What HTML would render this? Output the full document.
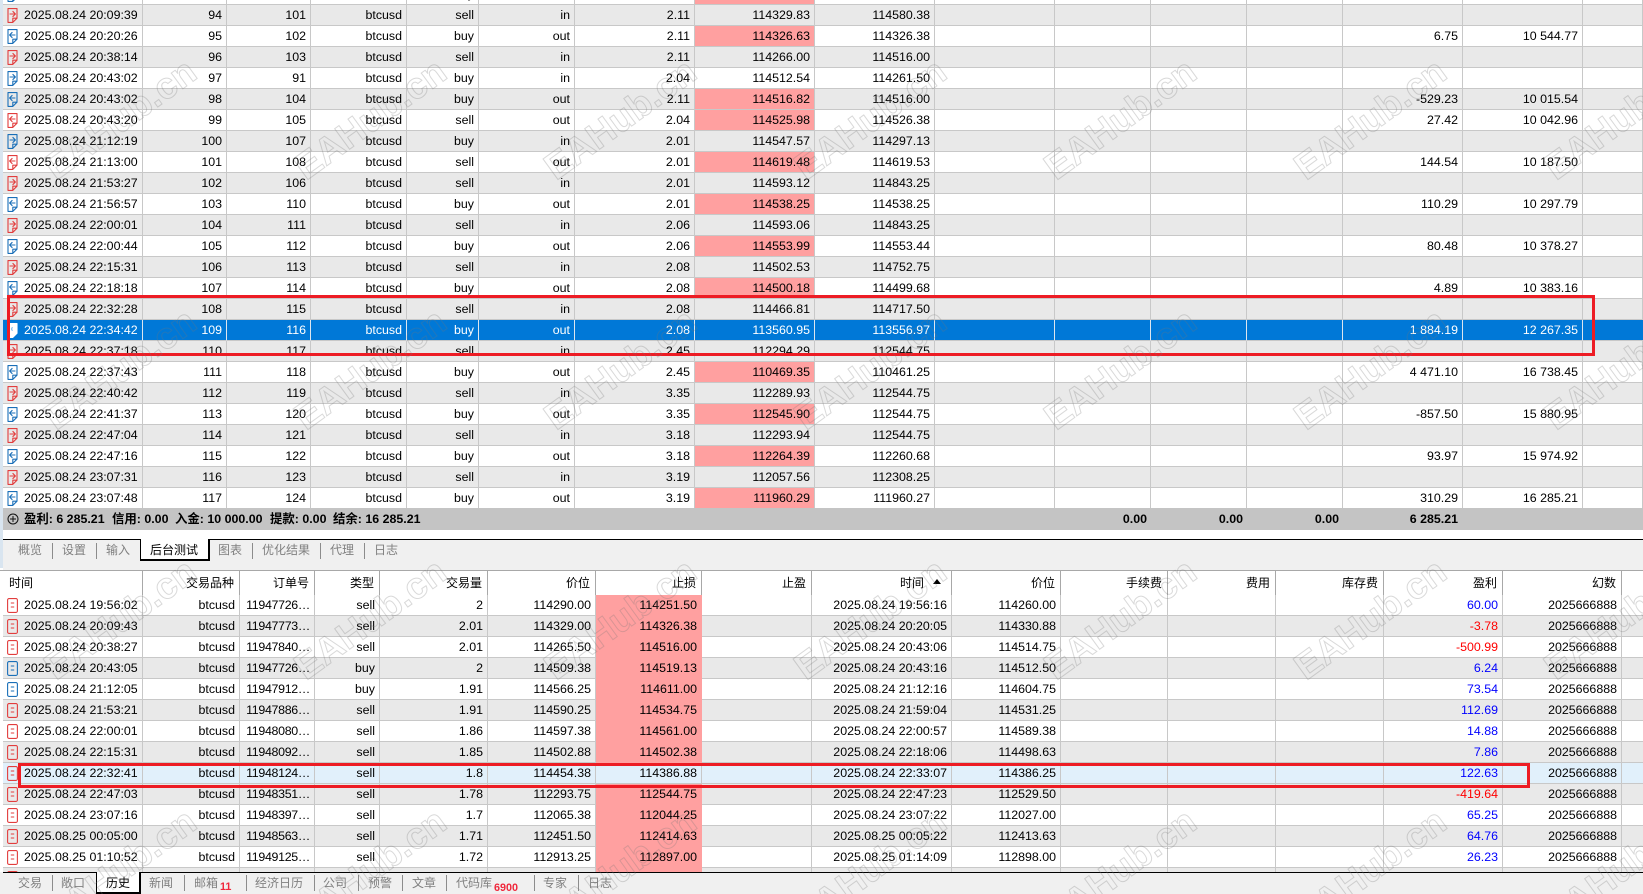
<!DOCTYPE html>
<html lang="zh"><head><meta charset="utf-8"><title>Backtest</title>
<style>
html,body{margin:0;padding:0;background:#fff}
body{position:relative;width:1643px;height:894px;overflow:hidden;font:12.4px/20px "Liberation Sans","Noto Sans CJK SC",sans-serif;color:#000}
table{position:absolute;left:3px;border-collapse:separate;border-spacing:0;table-layout:fixed;width:1640px}
td{height:21px;box-sizing:border-box;padding:1px 4px 0 0;line-height:19px;border-right:1px solid #c8c8c8;border-bottom:1px solid #c8c8c8;text-align:right;white-space:nowrap;overflow:hidden;background:#fff;position:relative}
td:first-child{text-align:left;padding-left:21px}
tr.g td{background:#e9e9e9}
tr.s td{background:#0078d7;color:#fff;border-right-color:#dde6ef;border-bottom-color:#c8c8c8}
tr.h td{background:#e1f0fb}
td.p,tr.g td.p,tr.h td.p{background:#ffa0a0}
#b td.p{border-bottom-color:#ffa0a0;border-right-color:#ffa0a0}
#b td:nth-child(3){letter-spacing:-.3px}
#b tr.k td{height:25px;border-bottom:0;border-top:1px solid #a8a8a8;border-right-color:#a8a8a8;font-size:12px;padding:0 5px 0 0;line-height:20px;letter-spacing:0}
#b tr.k td:first-child{padding-left:6px}
svg.i{position:absolute;left:4px;top:3px;width:11px;height:15px;fill:none;stroke-width:1.1;stroke-linejoin:round}
.r{stroke:#e23d3d}.u{stroke:#1a6fb8}
.w{fill:#fff!important;stroke:#fff}
.bl{color:#0000ff}.rd{color:#ff0000}
.a{position:absolute}
.bar{left:3px;top:508px;width:1640px;height:22px;background:#c4c4c4}
.sum{top:509px;font-weight:700;line-height:21px;white-space:nowrap}
.t{position:absolute;transform:translateX(-50%);font-size:12px;line-height:16px;color:#808080;white-space:nowrap}
.l{position:absolute;width:1px;background:#8c8c8c}
.n{position:absolute;font-weight:700;font-size:10.8px;line-height:12px;color:#f0283c}
</style></head><body>
<svg width="0" height="0" style="position:absolute"><defs>
<symbol id="ai" viewBox="0 0 11 15"><path d="M1 .6h9v9.6l-4.2 4.2H1zM5.8 14.4v-4.2H10M2.6 6h5.6M5.6 3.2 8.4 6 5.6 8.8"/></symbol>
<symbol id="ao" viewBox="0 0 11 15"><path d="M1 .6h9v9.6l-4.2 4.2H1zM5.8 14.4v-4.2H10M8.4 6H2.8M5.4 3.2 2.6 6l2.8 2.8"/></symbol>
<symbol id="d" viewBox="0 0 11 15"><path d="M2 .6h7a1.4 1.4 0 0 1 1.4 1.4v11a1.4 1.4 0 0 1-1.4 1.4H2A1.4 1.4 0 0 1 .6 13V2A1.4 1.4 0 0 1 2 .6zM3.8 5h3.4M3.8 9h3.4"/></symbol>
</defs></svg>

<div class="a" style="left:0;top:0;width:3px;height:568px;background:#d9e5f0"></div>

<table id="t" style="top:-16px">
<colgroup><col style="width:140px"><col style="width:84px"><col style="width:84px"><col style="width:96px"><col style="width:72px"><col style="width:96px"><col style="width:120px"><col style="width:120px"><col style="width:120px"><col style="width:120px"><col style="width:96px"><col style="width:96px"><col style="width:96px"><col style="width:120px"><col style="width:120px"><col style="width:60px"></colgroup>
<tr><td><svg class="i u"><use href="#ao"/></svg><td><td><td><td>buy<td><td><td class="p"><td><td><td><td><td><td><td><td></tr>
<tr class="g"><td><svg class="i r"><use href="#ai"/></svg>2025.08.24 20:09:39<td>94<td>101<td>btcusd<td>sell<td>in<td>2.11<td>114329.83<td>114580.38<td><td><td><td><td><td><td></tr>
<tr><td><svg class="i u"><use href="#ao"/></svg>2025.08.24 20:20:26<td>95<td>102<td>btcusd<td>buy<td>out<td>2.11<td class="p">114326.63<td>114326.38<td><td><td><td><td>6.75<td>10 544.77<td></tr>
<tr class="g"><td><svg class="i r"><use href="#ai"/></svg>2025.08.24 20:38:14<td>96<td>103<td>btcusd<td>sell<td>in<td>2.11<td>114266.00<td>114516.00<td><td><td><td><td><td><td></tr>
<tr><td><svg class="i u"><use href="#ai"/></svg>2025.08.24 20:43:02<td>97<td>91<td>btcusd<td>buy<td>in<td>2.04<td>114512.54<td>114261.50<td><td><td><td><td><td><td></tr>
<tr class="g"><td><svg class="i u"><use href="#ao"/></svg>2025.08.24 20:43:02<td>98<td>104<td>btcusd<td>buy<td>out<td>2.11<td class="p">114516.82<td>114516.00<td><td><td><td><td>-529.23<td>10 015.54<td></tr>
<tr><td><svg class="i r"><use href="#ao"/></svg>2025.08.24 20:43:20<td>99<td>105<td>btcusd<td>sell<td>out<td>2.04<td class="p">114525.98<td>114526.38<td><td><td><td><td>27.42<td>10 042.96<td></tr>
<tr class="g"><td><svg class="i u"><use href="#ai"/></svg>2025.08.24 21:12:19<td>100<td>107<td>btcusd<td>buy<td>in<td>2.01<td>114547.57<td>114297.13<td><td><td><td><td><td><td></tr>
<tr><td><svg class="i r"><use href="#ao"/></svg>2025.08.24 21:13:00<td>101<td>108<td>btcusd<td>sell<td>out<td>2.01<td class="p">114619.48<td>114619.53<td><td><td><td><td>144.54<td>10 187.50<td></tr>
<tr class="g"><td><svg class="i r"><use href="#ai"/></svg>2025.08.24 21:53:27<td>102<td>106<td>btcusd<td>sell<td>in<td>2.01<td>114593.12<td>114843.25<td><td><td><td><td><td><td></tr>
<tr><td><svg class="i u"><use href="#ao"/></svg>2025.08.24 21:56:57<td>103<td>110<td>btcusd<td>buy<td>out<td>2.01<td class="p">114538.25<td>114538.25<td><td><td><td><td>110.29<td>10 297.79<td></tr>
<tr class="g"><td><svg class="i r"><use href="#ai"/></svg>2025.08.24 22:00:01<td>104<td>111<td>btcusd<td>sell<td>in<td>2.06<td>114593.06<td>114843.25<td><td><td><td><td><td><td></tr>
<tr><td><svg class="i u"><use href="#ao"/></svg>2025.08.24 22:00:44<td>105<td>112<td>btcusd<td>buy<td>out<td>2.06<td class="p">114553.99<td>114553.44<td><td><td><td><td>80.48<td>10 378.27<td></tr>
<tr class="g"><td><svg class="i r"><use href="#ai"/></svg>2025.08.24 22:15:31<td>106<td>113<td>btcusd<td>sell<td>in<td>2.08<td>114502.53<td>114752.75<td><td><td><td><td><td><td></tr>
<tr><td><svg class="i u"><use href="#ao"/></svg>2025.08.24 22:18:18<td>107<td>114<td>btcusd<td>buy<td>out<td>2.08<td class="p">114500.18<td>114499.68<td><td><td><td><td>4.89<td>10 383.16<td></tr>
<tr class="g"><td><svg class="i r"><use href="#ai"/></svg>2025.08.24 22:32:28<td>108<td>115<td>btcusd<td>sell<td>in<td>2.08<td>114466.81<td>114717.50<td><td><td><td><td><td><td></tr>
<tr class="s"><td><svg class="i w" style="stroke:#fff"><use href="#ao"/></svg>2025.08.24 22:34:42<td>109<td>116<td>btcusd<td>buy<td>out<td>2.08<td>113560.95<td>113556.97<td><td><td><td><td>1 884.19<td>12 267.35<td style="border-right:0"></tr>
<tr class="g"><td><svg class="i r"><use href="#ai"/></svg>2025.08.24 22:37:18<td>110<td>117<td>btcusd<td>sell<td>in<td>2.45<td>112294.29<td>112544.75<td><td><td><td><td><td><td></tr>
<tr><td><svg class="i u"><use href="#ao"/></svg>2025.08.24 22:37:43<td>111<td>118<td>btcusd<td>buy<td>out<td>2.45<td class="p">110469.35<td>110461.25<td><td><td><td><td>4 471.10<td>16 738.45<td></tr>
<tr class="g"><td><svg class="i r"><use href="#ai"/></svg>2025.08.24 22:40:42<td>112<td>119<td>btcusd<td>sell<td>in<td>3.35<td>112289.93<td>112544.75<td><td><td><td><td><td><td></tr>
<tr><td><svg class="i u"><use href="#ao"/></svg>2025.08.24 22:41:37<td>113<td>120<td>btcusd<td>buy<td>out<td>3.35<td class="p">112545.90<td>112544.75<td><td><td><td><td>-857.50<td>15 880.95<td></tr>
<tr class="g"><td><svg class="i r"><use href="#ai"/></svg>2025.08.24 22:47:04<td>114<td>121<td>btcusd<td>sell<td>in<td>3.18<td>112293.94<td>112544.75<td><td><td><td><td><td><td></tr>
<tr><td><svg class="i u"><use href="#ao"/></svg>2025.08.24 22:47:16<td>115<td>122<td>btcusd<td>buy<td>out<td>3.18<td class="p">112264.39<td>112260.68<td><td><td><td><td>93.97<td>15 974.92<td></tr>
<tr class="g"><td><svg class="i r"><use href="#ai"/></svg>2025.08.24 23:07:31<td>116<td>123<td>btcusd<td>sell<td>in<td>3.19<td>112057.56<td>112308.25<td><td><td><td><td><td><td></tr>
<tr><td><svg class="i u"><use href="#ao"/></svg>2025.08.24 23:07:48<td>117<td>124<td>btcusd<td>buy<td>out<td>3.19<td class="p">111960.29<td>111960.27<td><td><td><td><td>310.29<td>16 285.21<td></tr>
</table>

<div class="a bar"></div>
<svg class="a" style="left:7px;top:513px" width="12" height="12" fill="none" stroke="#111"><circle cx="6" cy="6" r="5"/><path d="M3 6h6M6 3v6"/></svg>
<div class="a sum" style="left:24px">盈利: 6 285.21</div>
<div class="a sum" style="left:112px">信用: 0.00</div>
<div class="a sum" style="left:175px">入金: 10 000.00</div>
<div class="a sum" style="left:270px">提款: 0.00</div>
<div class="a sum" style="left:333px">结余: 16 285.21</div>
<div class="a sum" style="right:496px">0.00</div>
<div class="a sum" style="right:400px">0.00</div>
<div class="a sum" style="right:304px">0.00</div>
<div class="a sum" style="right:185px">6 285.21</div>

<div class="a" style="left:3px;top:539px;width:1640px;height:1px;background:#000"></div>
<div class="a" style="left:3px;top:540px;width:1640px;height:30px;background:#f0f0f0"></div>
<div class="a" style="left:140px;top:539px;width:67px;height:20px;background:#fff;border-left:1px solid #000;border-right:2px solid #000;border-bottom:2px solid #000"></div>
<div class="t" style="left:30px;top:542px">概览</div><div class="l" style="left:52px;top:543px;height:16px"></div>
<div class="t" style="left:74px;top:542px">设置</div><div class="l" style="left:96px;top:543px;height:16px"></div>
<div class="t" style="left:118px;top:542px">输入</div>
<div class="t" style="left:174px;top:542px;color:#000">后台测试</div>
<div class="t" style="left:230px;top:542px">图表</div><div class="l" style="left:252px;top:543px;height:16px"></div>
<div class="t" style="left:286px;top:542px">优化结果</div><div class="l" style="left:320px;top:543px;height:16px"></div>
<div class="t" style="left:342px;top:542px">代理</div><div class="l" style="left:364px;top:543px;height:16px"></div>
<div class="t" style="left:386px;top:542px">日志</div>

<div class="a" style="left:0;top:570px;width:3px;height:1px;background:#a8a8a8"></div>
<table id="b" style="top:570px">
<colgroup><col style="width:140px"><col style="width:97px"><col style="width:75px"><col style="width:65px"><col style="width:108px"><col style="width:108px"><col style="width:106px"><col style="width:110px"><col style="width:140px"><col style="width:109px"><col style="width:107px"><col style="width:108px"><col style="width:108px"><col style="width:119px"><col style="width:119px"><col style="width:22px"></colgroup>
<tr class="k"><td>时间<td>交易品种<td>订单号<td>类型<td>交易量<td>价位<td>止损<td>止盈<td style="padding-right:27px">时间<td>价位<td>手续费<td>费用<td>库存费<td>盈利<td>幻数<td></tr>
<tr><td><svg class="i r"><use href="#d"/></svg>2025.08.24 19:56:02<td>btcusd<td>11947726…<td>sell<td>2<td>114290.00<td class="p">114251.50<td><td>2025.08.24 19:56:16<td>114260.00<td><td><td><td class="bl">60.00<td>2025666888<td></tr>
<tr class="g"><td><svg class="i r"><use href="#d"/></svg>2025.08.24 20:09:43<td>btcusd<td>11947773…<td>sell<td>2.01<td>114329.00<td class="p">114326.38<td><td>2025.08.24 20:20:05<td>114330.88<td><td><td><td class="rd">-3.78<td>2025666888<td></tr>
<tr><td><svg class="i r"><use href="#d"/></svg>2025.08.24 20:38:27<td>btcusd<td>11947840…<td>sell<td>2.01<td>114265.50<td class="p">114516.00<td><td>2025.08.24 20:43:06<td>114514.75<td><td><td><td class="rd">-500.99<td>2025666888<td></tr>
<tr class="g"><td><svg class="i u"><use href="#d"/></svg>2025.08.24 20:43:05<td>btcusd<td>11947726…<td>buy<td>2<td>114509.38<td class="p">114519.13<td><td>2025.08.24 20:43:16<td>114512.50<td><td><td><td class="bl">6.24<td>2025666888<td></tr>
<tr><td><svg class="i u"><use href="#d"/></svg>2025.08.24 21:12:05<td>btcusd<td>11947912…<td>buy<td>1.91<td>114566.25<td class="p">114611.00<td><td>2025.08.24 21:12:16<td>114604.75<td><td><td><td class="bl">73.54<td>2025666888<td></tr>
<tr class="g"><td><svg class="i r"><use href="#d"/></svg>2025.08.24 21:53:21<td>btcusd<td>11947886…<td>sell<td>1.91<td>114590.25<td class="p">114534.75<td><td>2025.08.24 21:59:04<td>114531.25<td><td><td><td class="bl">112.69<td>2025666888<td></tr>
<tr><td><svg class="i r"><use href="#d"/></svg>2025.08.24 22:00:01<td>btcusd<td>11948080…<td>sell<td>1.86<td>114597.38<td class="p">114561.00<td><td>2025.08.24 22:00:57<td>114589.38<td><td><td><td class="bl">14.88<td>2025666888<td></tr>
<tr class="g"><td><svg class="i r"><use href="#d"/></svg>2025.08.24 22:15:31<td>btcusd<td>11948092…<td>sell<td>1.85<td>114502.88<td class="p">114502.38<td><td>2025.08.24 22:18:06<td>114498.63<td><td><td><td class="bl">7.86<td>2025666888<td></tr>
<tr class="h"><td><svg class="i r"><use href="#d"/></svg>2025.08.24 22:32:41<td>btcusd<td>11948124…<td>sell<td>1.8<td>114454.38<td>114386.88<td><td>2025.08.24 22:33:07<td>114386.25<td><td><td><td class="bl">122.63<td>2025666888<td></tr>
<tr class="g"><td><svg class="i r"><use href="#d"/></svg>2025.08.24 22:47:03<td>btcusd<td>11948351…<td>sell<td>1.78<td>112293.75<td class="p">112544.75<td><td>2025.08.24 22:47:23<td>112529.50<td><td><td><td class="rd">-419.64<td>2025666888<td></tr>
<tr><td><svg class="i r"><use href="#d"/></svg>2025.08.24 23:07:16<td>btcusd<td>11948397…<td>sell<td>1.7<td>112065.38<td class="p">112044.25<td><td>2025.08.24 23:07:22<td>112027.00<td><td><td><td class="bl">65.25<td>2025666888<td></tr>
<tr class="g"><td><svg class="i r"><use href="#d"/></svg>2025.08.25 00:05:00<td>btcusd<td>11948563…<td>sell<td>1.71<td>112451.50<td class="p">112414.63<td><td>2025.08.25 00:05:22<td>112413.63<td><td><td><td class="bl">64.76<td>2025666888<td></tr>
<tr><td><svg class="i r"><use href="#d"/></svg>2025.08.25 01:10:52<td>btcusd<td>11949125…<td>sell<td>1.72<td>112913.25<td class="p">112897.00<td><td>2025.08.25 01:14:09<td>112898.00<td><td><td><td class="bl">26.23<td>2025666888<td></tr>
<tr class="g"><td><svg class="i r"><use href="#d"/></svg><td><td><td><td><td><td class="p"><td><td><td><td><td><td><td><td><td></tr>
</table>
<div class="a" style="left:933px;top:579px;width:0;height:0;border-left:4px solid transparent;border-right:4px solid transparent;border-bottom:5px solid #000"></div>

<div class="a" style="left:0;top:872px;width:1643px;height:22px;background:#f0f0f0"></div>
<div class="a" style="left:3px;top:872px;width:1640px;height:1px;background:#000"></div>
<div class="a" style="left:96px;top:872px;width:42px;height:20px;background:#fff;border-left:1px solid #000;border-right:2px solid #000;border-bottom:2px solid #000"></div>
<div class="t" style="left:30px;top:875px">交易</div><div class="l" style="left:52px;top:875px;height:16px"></div>
<div class="t" style="left:73px;top:875px">敞口</div>
<div class="t" style="left:118px;top:875px;color:#000">历史</div>
<div class="t" style="left:161px;top:875px">新闻</div><div class="l" style="left:184px;top:875px;height:16px"></div>
<div class="t" style="left:206px;top:875px">邮箱</div><div class="n" style="left:220px;top:881px">11</div><div class="l" style="left:246px;top:875px;height:16px"></div>
<div class="t" style="left:279px;top:875px">经济日历</div><div class="l" style="left:314px;top:875px;height:16px"></div>
<div class="t" style="left:335px;top:875px">公司</div><div class="l" style="left:358px;top:875px;height:16px"></div>
<div class="t" style="left:380px;top:875px">预警</div><div class="l" style="left:402px;top:875px;height:16px"></div>
<div class="t" style="left:424px;top:875px">文章</div><div class="l" style="left:446px;top:875px;height:16px"></div>
<div class="t" style="left:474px;top:875px">代码库</div><div class="n" style="left:494px;top:882px">6900</div><div class="l" style="left:534px;top:875px;height:16px"></div>
<div class="t" style="left:555px;top:875px">专家</div><div class="l" style="left:578px;top:875px;height:16px"></div>
<div class="t" style="left:600px;top:875px">日志</div>

<div class="a" style="left:7px;top:295px;width:1582px;height:55px;border:3px solid #ed1c24"></div>
<div class="a" style="left:18px;top:763px;width:1506px;height:19px;border:3px solid #ed1c24"></div>

<svg class="a" style="left:0;top:0;pointer-events:none" width="1643" height="894" font-family="Liberation Sans, sans-serif" font-weight="700" font-size="37" fill="none" stroke="#787878" stroke-opacity=".28" stroke-width="1">
<text transform="translate(56 181) rotate(-36)">EAHub.cn</text><text transform="translate(306 181) rotate(-36)">EAHub.cn</text><text transform="translate(556 181) rotate(-36)">EAHub.cn</text><text transform="translate(806 181) rotate(-36)">EAHub.cn</text><text transform="translate(1056 181) rotate(-36)">EAHub.cn</text><text transform="translate(1306 181) rotate(-36)">EAHub.cn</text><text transform="translate(1556 181) rotate(-36)">EAHub.cn</text>
<text transform="translate(56 431) rotate(-36)">EAHub.cn</text><text transform="translate(306 431) rotate(-36)">EAHub.cn</text><text transform="translate(556 431) rotate(-36)">EAHub.cn</text><text transform="translate(806 431) rotate(-36)">EAHub.cn</text><text transform="translate(1056 431) rotate(-36)">EAHub.cn</text><text transform="translate(1306 431) rotate(-36)">EAHub.cn</text><text transform="translate(1556 431) rotate(-36)">EAHub.cn</text>
<text transform="translate(56 681) rotate(-36)">EAHub.cn</text><text transform="translate(306 681) rotate(-36)">EAHub.cn</text><text transform="translate(556 681) rotate(-36)">EAHub.cn</text><text transform="translate(806 681) rotate(-36)">EAHub.cn</text><text transform="translate(1056 681) rotate(-36)">EAHub.cn</text><text transform="translate(1306 681) rotate(-36)">EAHub.cn</text><text transform="translate(1556 681) rotate(-36)">EAHub.cn</text>
<text transform="translate(56 931) rotate(-36)">EAHub.cn</text><text transform="translate(306 931) rotate(-36)">EAHub.cn</text><text transform="translate(556 931) rotate(-36)">EAHub.cn</text><text transform="translate(806 931) rotate(-36)">EAHub.cn</text><text transform="translate(1056 931) rotate(-36)">EAHub.cn</text><text transform="translate(1306 931) rotate(-36)">EAHub.cn</text><text transform="translate(1556 931) rotate(-36)">EAHub.cn</text>
</svg>
</body></html>
